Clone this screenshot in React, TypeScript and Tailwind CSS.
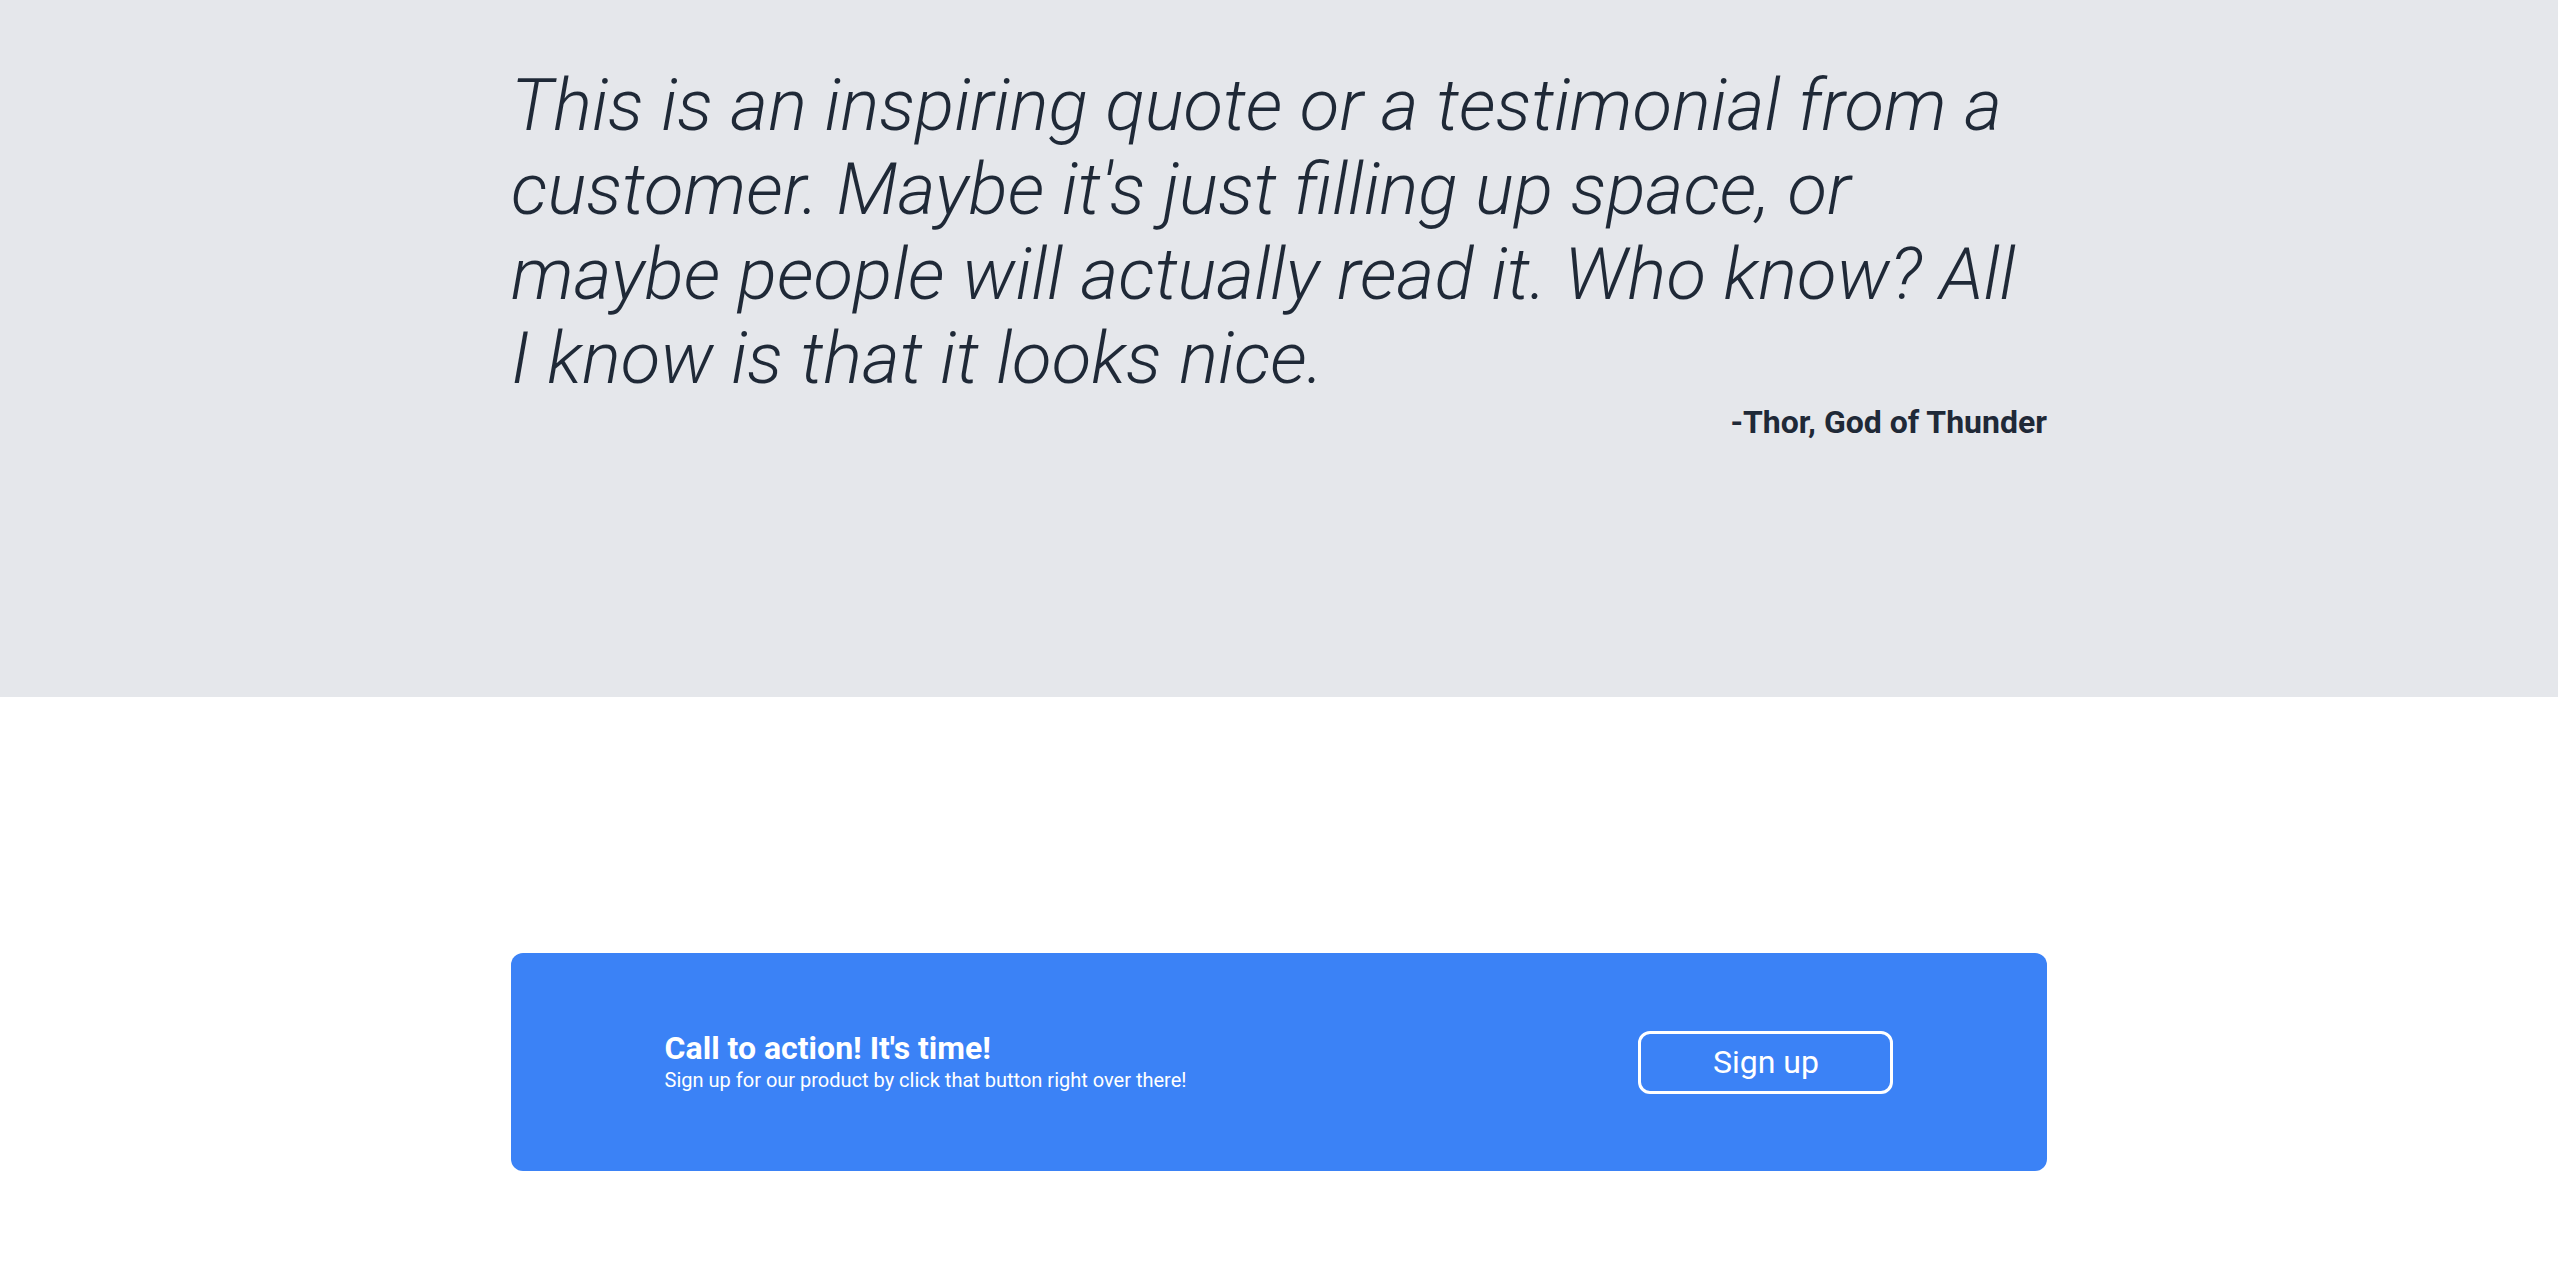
import React from "react";

const Quote: React.FC = () => {
  return (
    <section className="h-[697px] bg-[#e5e7eb]">
      <div className="mx-auto max-w-[1536px] pt-[63px]">
        <p className="text-[72.8px] font-light italic leading-[84.4px] text-[#1f2937]">
          This is an inspiring quote or a testimonial from a customer. Maybe it's just filling up space, or maybe
          people will actually read it. Who know? All I know is that it looks nice.
        </p>
        <p className="mt-[3px] text-right text-[32px] font-bold leading-9 text-[#1f2937]">-Thor, God of Thunder</p>
      </div>
    </section>
  );
};

const CallToAction: React.FC = () => {
  return (
    <section className="mx-auto mt-[256px] max-w-[1536px]">
      <div className="flex h-[218px] items-center rounded-xl bg-[#3b82f6]">
        <div className="mx-auto flex w-4/5 items-center justify-between">
          <div className="text-white">
            <h2 className="text-[32px] font-bold leading-9">Call to action! It's time!</h2>
            <p className="text-xl leading-7">Sign up for our product by click that button right over there!</p>
          </div>
          <button className="h-[63px] w-[255px] rounded-xl border-[3px] border-white text-[32px] text-white">
            Sign up
          </button>
        </div>
      </div>
    </section>
  );
};

export default function App() {
  return (
    <div className="min-h-screen bg-white font-['Roboto',sans-serif]">
      <Quote />
      <CallToAction />
    </div>
  );
}
